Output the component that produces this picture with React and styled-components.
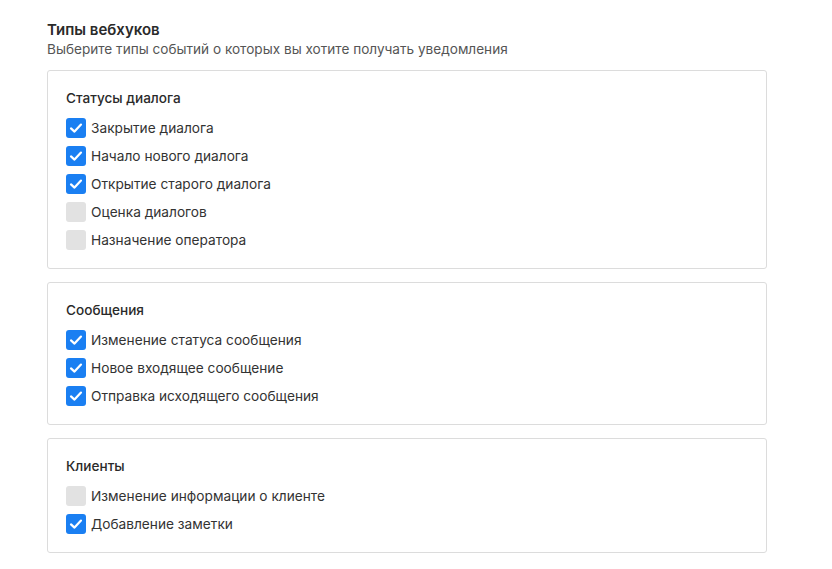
import React from "react";
import styled, { createGlobalStyle } from "styled-components";

const GlobalStyle = createGlobalStyle`
  body {
    margin: 0;
    background: #ffffff;
    font-family: Inter, "Noto Sans", sans-serif;
    color: #2b2b2b;
  }
`;

const Page = styled.div`
  padding: 20px 0 0 47px;
  width: 720px;
`;

const Title = styled.h2`
  margin: 0;
  font-size: 15px;
  line-height: 20px;
  font-weight: 600;
  color: #2a2a2a;
`;

const Subtitle = styled.p`
  margin: 0 0 12px;
  font-size: 13.6px;
  line-height: 18px;
  color: #555555;
`;

const Card = styled.section`
  border: 1px solid #dcdcdc;
  border-radius: 3px;
  padding: 17px 18px 14px;
  & + & {
    margin-top: 13px;
  }
`;

const CardTitle = styled.h3`
  margin: 0 0 6px;
  font-size: 13.6px;
  line-height: 20px;
  font-weight: 500;
  color: #2a2a2a;
`;

const Row = styled.label`
  display: flex;
  align-items: center;
  gap: 5px;
  height: 28px;
  font-size: 13.7px;
  color: #333333;
  cursor: pointer;
`;

const Box = styled.span`
  width: 20px;
  height: 20px;
  border-radius: 3px;
  background: ${p => (p.$checked ? "#1a7ff2" : "#e2e2e2")};
  display: flex;
  align-items: center;
  justify-content: center;
  flex-shrink: 0;
`;

const Check = () => (
  <svg width="16" height="16" viewBox="0 0 16 16" fill="none">
    <path
      d="M3 8.4 L6.5 11.6 L13 4.6"
      stroke="#ffffff"
      strokeWidth="2.2"
      strokeLinecap="round"
      strokeLinejoin="round"
    />
  </svg>
);

const groups = [
  {
    title: "Статусы диалога",
    items: [
      ["Закрытие диалога", true],
      ["Начало нового диалога", true],
      ["Открытие старого диалога", true],
      ["Оценка диалогов", false],
      ["Назначение оператора", false]
    ]
  },
  {
    title: "Сообщения",
    items: [
      ["Изменение статуса сообщения", true],
      ["Новое входящее сообщение", true],
      ["Отправка исходящего сообщения", true]
    ]
  },
  {
    title: "Клиенты",
    items: [
      ["Изменение информации о клиенте", false],
      ["Добавление заметки", true]
    ]
  }
];

export default function App() {
  return (
    <>
      <GlobalStyle />
      <Page>
        <Title>Типы вебхуков</Title>
        <Subtitle>Выберите типы событий о которых вы хотите получать уведомления</Subtitle>
        {groups.map(g => (
          <Card key={g.title}>
            <CardTitle>{g.title}</CardTitle>
            {g.items.map(([label, checked]) => (
              <Row key={label}>
                <Box $checked={checked}>{checked && <Check />}</Box>
                {label}
              </Row>
            ))}
          </Card>
        ))}
      </Page>
    </>
  );
}
